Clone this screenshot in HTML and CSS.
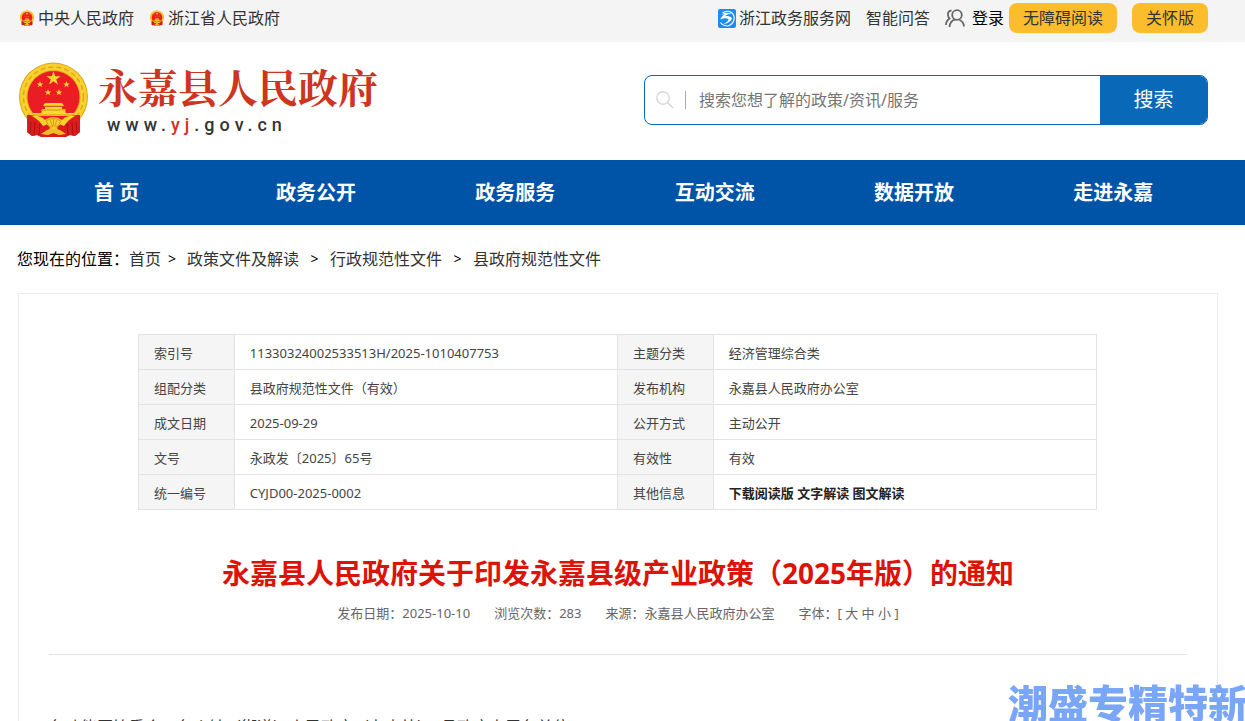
FILE: index.html
```html
<!DOCTYPE html>
<html lang="zh-CN">
<head>
<meta charset="utf-8">
<title>永嘉县人民政府</title>
<link rel="stylesheet" href="styles.css">
</head>
<body>
<svg class="defs" aria-hidden="true">
  <symbol id="star" viewBox="-10 -10 20 20"><path d="M0-10 2.25-3.09 9.51-3.09 3.63 1.18 5.88 8.09 0 3.82-5.88 8.09-3.63 1.18-9.51-3.09-2.25-3.09Z"/></symbol>
  <symbol id="emblem" viewBox="0 0 69 76">
    <path d="M10 50 8 70 13 74 18 73 22 75 34 75 47 75 51 73 56 74 61 70 59 50Z" fill="#dc1c1c"/>
    <circle cx="34.500" cy="35" r="34.500" fill="#dca51d"/>
    <circle cx="34.500" cy="35" r="33.500" fill="#f8d12c"/>
    <circle cx="34.500" cy="35" r="30" fill="none" stroke="#e0a81f" stroke-width="1.500" stroke-dasharray="5 3"/>
    <circle cx="34.500" cy="35" r="27" fill="#e3a91d"/>
    <circle cx="34.500" cy="35" r="26" fill="#ec1c24"/>
    <g fill="#ffd92e">
      <use href="#star" x="27" y="9" width="15" height="15"/>
      <use href="#star" x="17.500" y="19" width="7" height="7"/>
      <use href="#star" x="44" y="19" width="7" height="7"/>
      <use href="#star" x="25.500" y="27" width="7" height="7"/>
      <use href="#star" x="36.500" y="27" width="7" height="7"/>
      <path d="M26 41H43L45 44H24ZM26 45H43V47H26ZM23 47H46L47 53H22ZM14 51H55V54H14Z"/>
    </g>
    <path d="M22 48H47M14 53H55M25 44H44" stroke="#d69419" fill="none"/>
    <path d="M8 53Q18 52 25 59L31 66 26 75 18 73 13 74 8 70ZM61 53Q51 52 44 59L38 66 43 75 51 73 56 74 61 70Z" fill="#dc1c1c"/>
    <path d="M12 60 11 71M16 60 15 73M21 62 20 73M57 60 58 71M53 60 54 73M48 62 49 73" stroke="#a90f18" fill="none"/>
    <path d="M13 54Q21 53 26 58Q34 52 43 58Q48 53 56 54Q49 58 45 64L40 62 29 62 24 64Q20 58 13 54Z" fill="#f8d12c"/>
    <path d="M27 59Q34 54 42 59L39 64H30Z" fill="#f8d12c" stroke="#d99b1b"/>
    <path d="M31 58 33 63M34.500 56V63M38 58 36 63" stroke="#d99b1b" fill="none"/>
    <path d="M28 68Q34 65 41 68L47 72 40 73 34.500 71 29 73 22 72Z" fill="#f3bd27"/>
  </symbol>
</svg>

<div class="topbar">
  <nav class="topbar-group" aria-label="上级网站">
    <a class="icon-link" href="#"><svg class="mini-emblem" aria-hidden="true"><use href="#emblem"/></svg>中央人民政府</a>
    <a class="icon-link" href="#"><svg class="mini-emblem" aria-hidden="true"><use href="#emblem"/></svg>浙江省人民政府</a>
  </nav>
  <div class="topbar-tools">
    <a class="service" href="#"><svg class="service-icon" viewBox="0 0 18 19" aria-hidden="true"><rect width="18" height="19" rx="2" fill="#1b8cf5"/><path d="M4.500 4Q9 .8 13.500 3.500Q17 6.500 16 11Q14.500 15.500 10 17Q5 17 2.500 13.500" fill="none" stroke="#fff" stroke-width="1.100"/><path d="M3.500 6Q7 2.500 13.500 4.500Q9 5 7 7Q13 6.500 14 9.500Q12 14 5 15.500Q11 12 10.500 10Q7 8.500 2.500 10.500Q3 7.500 7 5Z" fill="#fff"/></svg>浙江政务服务网</a>
    <a class="answer" href="#">智能问答</a>
    <a class="login" href="#"><svg class="user-icon" viewBox="0 0 20 19" aria-hidden="true"><g fill="none" stroke="#666" stroke-width="1.800"><circle cx="12" cy="6" r="4.800"/><path d="M4.500 18C4.800 14 7 11.500 10 10.700M14.500 11Q18.800 13 19 17.500M6.500 1.500Q2.500 2 3 6Q3 8 4.500 9.500Q1 12 1 16"/></g></svg>登录</a>
    <button class="pill" type="button">无障碍阅读</button>
    <button class="pill care" type="button">关怀版</button>
  </div>
</div>

<header class="header">
  <a class="brand" href="#">
    <svg class="emblem" aria-hidden="true"><use href="#emblem"/></svg>
    <span class="brand-text">
      <span class="brand-name">永嘉县人民政府</span>
      <span class="brand-url">www.<span class="accent">yj</span>.gov.cn</span>
    </span>
  </a>
  <form class="search">
    <svg class="search-icon" viewBox="0 0 18 18" aria-hidden="true"><circle cx="7" cy="7" r="6.200" fill="none" stroke="#d8d8d8" stroke-width="1.400"/><path d="M11.500 11.500 17 17" stroke="#d8d8d8" stroke-width="1.600"/></svg>
    <input class="search-input" type="text" aria-label="搜索" placeholder="搜索您想了解的政策/资讯/服务">
    <button class="search-button" type="button">搜索</button>
  </form>
</header>

<nav class="main-nav" aria-label="主导航">
  <a href="#">首 页</a><a href="#">政务公开</a><a href="#">政务服务</a><a href="#">互动交流</a><a href="#">数据开放</a><a href="#">走进永嘉</a>
</nav>

<nav class="crumbs" aria-label="当前位置">
  <span class="crumb-label">您现在的位置：</span>
  <a href="#">首页</a><span class="sep first">&gt;</span>
  <a href="#">政策文件及解读</a><span class="sep">&gt;</span>
  <a href="#">行政规范性文件</a><span class="sep">&gt;</span>
  <a href="#">县政府规范性文件</a>
</nav>

<main class="article">
  <table class="info">
    <tr><th scope="row">索引号</th><td>11330324002533513H/2025-1010407753</td><th scope="row">主题分类</th><td>经济管理综合类</td></tr>
    <tr><th scope="row">组配分类</th><td>县政府规范性文件（有效）</td><th scope="row">发布机构</th><td>永嘉县人民政府办公室</td></tr>
    <tr><th scope="row">成文日期</th><td>2025-09-29</td><th scope="row">公开方式</th><td>主动公开</td></tr>
    <tr><th scope="row">文号</th><td>永政发〔2025〕65号</td><th scope="row">有效性</th><td>有效</td></tr>
    <tr><th scope="row">统一编号</th><td>CYJD00-2025-0002</td><th scope="row">其他信息</th><td class="downloads"><a href="#">下载阅读版</a> <a href="#">文字解读</a> <a href="#">图文解读</a></td></tr>
  </table>
  <h1 class="title">永嘉县人民政府关于印发永嘉县级产业政策（2025年版）的通知</h1>
  <div class="meta">
    <span>发布日期：2025-10-10</span>
    <span>浏览次数：283</span>
    <span>来源：永嘉县人民政府办公室</span>
    <span>字体：[ <a href="#">大</a> <a href="#">中</a> <a href="#">小</a> ]</span>
  </div>
  <div class="content">
    <p>各功能区管委会，各乡镇（街道）人民政府（办事处），县政府直属各单位：</p>
  </div>
</main>
<div class="watermark">潮盛专精特新</div>
</body>
</html>
```

FILE: styles.css
```css
* { box-sizing: border-box; }

body {
  margin: 0;
  height: 100vh;
  overflow: hidden;
  background: #fff;
  color: #333;
  font: 16px/24px "Noto Sans", "Noto Sans CJK SC", sans-serif;
}

a { color: inherit; text-decoration: none; }
button, input { font: inherit; }
svg { display: block; flex: none; }
.defs { position: absolute; width: 0; height: 0; }

.topbar {
  display: flex;
  justify-content: space-between;
  height: 42px;
  padding: 3px 37px 0 20px;
  background: #f4f4f4;
  white-space: nowrap;
}
.topbar-group, .topbar-tools { display: flex; align-items: center; height: 30px; }
.topbar-group { gap: 16px; }
.icon-link, .service, .login { display: flex; align-items: center; }
.icon-link { gap: 4px; }
.mini-emblem { width: 14px; height: 16px; }
.service { gap: 3px; }
.service-icon { width: 18px; height: 19px; }
.answer { margin: 0 15px; }
.login { gap: 7px; color: #000; }
.user-icon { width: 20px; height: 19px; }
.pill {
  height: 30px;
  margin-left: 5px;
  padding: 0 14px;
  border: 0;
  border-radius: 8px;
  background: #fbbd2c;
  color: #333;
}
.care { margin-left: 15px; }

.header {
  display: flex;
  align-items: center;
  justify-content: space-between;
  height: 118px;
  padding: 0 37px 2px 19px;
}
.brand { display: flex; gap: 10px; }
.emblem { width: 69px; height: 76px; }
.brand-text { display: flex; flex-direction: column; gap: 5px; }
.brand-name {
  color: #cd3521;
  font: 700 40px/48px "Noto Serif CJK SC", "Noto Sans CJK SC", serif;
}
.brand-url {
  padding-left: 9px;
  color: #333;
  font: 500 18px/20px Roboto, "Liberation Sans", sans-serif;
  letter-spacing: 5px;
}
.accent { color: #cd3521; }

.search {
  display: flex;
  align-items: center;
  width: 564px;
  height: 50px;
  border: 1px solid #0a68b9;
  border-radius: 8px;
  overflow: hidden;
}
.search-icon { width: 18px; height: 18px; margin: 0 11px; }
.search-input {
  flex: 1;
  min-width: 0;
  height: 18px;
  padding: 0 13px;
  border: 0;
  border-left: 1px solid #aaa;
  outline: 0;
  color: #333;
}
.search-input::placeholder { color: #757575; }
.search-button {
  width: 107px;
  height: 50px;
  border: 0;
  background: #0a68b9;
  color: #fff;
  font-size: 20px;
}

.main-nav {
  display: grid;
  grid-template-columns: repeat(6, 1fr);
  padding: 1px 32px 0 17px;
  background: #0054a7;
  color: #fff;
  font-size: 20px;
  font-weight: 700;
  line-height: 64px;
  text-align: center;
}

.crumbs { display: flex; align-items: center; padding: 22px 17px; color: #333; }
.crumb-label { color: #000; }
.sep {
  width: 31px;
  color: #000;
  font-size: 14px;
  text-align: center;
}
.first { width: 26px; padding-right: 4px; }

.article {
  margin: 0 27px 0 18px;
  padding: 40px 30px;
  border: 1px solid #e9e9e9;
}
.info {
  width: calc(100% - 179px);
  margin: 0 90px 0 89px;
  border-collapse: collapse;
  table-layout: fixed;
  color: #444;
  font-size: 13px;
  line-height: 20px;
}
.info th, .info td {
  height: 35px;
  padding: 1px 15px 0;
  border: 1px solid #e3e3e3;
  font-weight: 400;
  text-align: left;
}
.info th { width: 10%; background: #f5f5f5; }
.info td { width: 40%; }
.info .downloads { color: #222; font-weight: 700; }

.title {
  margin: 43px 0 0;
  color: #dc1308;
  font-size: 28px;
  line-height: 40px;
  text-align: center;
}
.meta {
  display: flex;
  justify-content: center;
  gap: 24px;
  padding: 10px 0 31px;
  border-bottom: 1px solid #e3e3e3;
  color: #666;
  font-size: 13px;
  line-height: 20px;
}
.content { padding-top: 56px; }
.content p { margin: 0; line-height: 32px; }

.watermark {
  position: fixed;
  left: calc(100% - 237px);
  bottom: -1px;
  color: rgba(104, 154, 247, 0.88);
  font: 900 40px/40px "Noto Sans CJK SC", sans-serif;
  white-space: nowrap;
}
```
